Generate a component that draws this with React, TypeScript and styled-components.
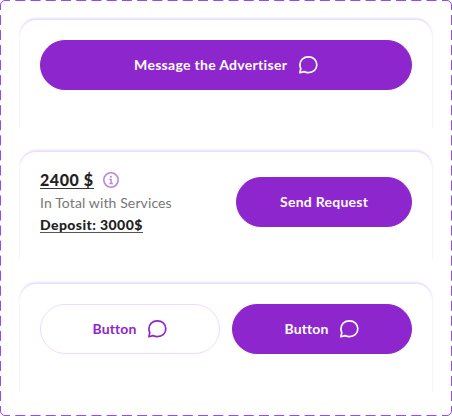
import React from "react";
import styled, { createGlobalStyle, css } from "styled-components";

const GlobalStyle = createGlobalStyle`
  * { box-sizing: border-box; }
  body { margin: 0; background: #fff; font-family: Lato, "Open Sans", sans-serif; }
`;

const Frame = styled.main`
  position: relative;
  display: flex;
  flex-direction: column;
  gap: 22px;
  width: 452px;
  height: 416px;
  padding: 20px;
  overflow: hidden;
  background: #fff;
`;

const Outline = styled.svg`
  position: absolute;
  inset: 0;
  pointer-events: none;
`;

const Panel = styled.section`
  display: flex;
  align-items: flex-start;
  justify-content: space-between;
  gap: 12px;
  height: 110px;
  padding: 20px;
  border-radius: 16px 16px 0 0;
  background: #fff;
  box-shadow: 0 -2px 2px #eadcff, 0 0 1px #efe4ff;
  clip-path: inset(-6px -6px 0 -6px);
`;

const Button = styled.button<{ $outlined?: boolean; $width?: number }>`
  display: flex;
  align-items: center;
  justify-content: center;
  gap: 9px;
  height: 50px;
  padding: 0;
  ${({ $width }) => ($width ? css`flex: 0 0 ${$width}px;` : css`flex: 1;`)}
  border: 1px solid ${({ $outlined }) => ($outlined ? "#f0daff" : "#8e26cd")};
  border-radius: 25px;
  background: ${({ $outlined }) => ($outlined ? "#fff" : "#8e26cd")};
  color: ${({ $outlined }) => ($outlined ? "#8e26cd" : "#fff")};
  font: 700 14px/20px Lato, sans-serif;

  svg { margin-right: -2px; }
`;

const Label = styled.span<{ $spacing: number }>`
  letter-spacing: ${({ $spacing }) => $spacing}px;
  margin-right: ${({ $spacing }) => -$spacing}px;
`;

const SummaryRow = styled.div`
  display: flex;
  align-items: center;
  justify-content: space-between;
  width: 100%;
  height: 60px;
`;

const Summary = styled.div`
  display: flex;
  flex-direction: column;
  color: #222;
`;

const PriceLine = styled.div`
  display: flex;
  align-items: center;
  gap: 7px;
  height: 18px;
`;

const Price = styled.span`
  border-bottom: 1px solid #333;
  font: 900 16px/17px Lato, sans-serif;
  letter-spacing: 0.55px;
  width: 54px;
  white-space: nowrap;
`;

const Caption = styled.span`
  margin-top: 3px;
  color: #777;
  font: 400 14px/22px Lato, sans-serif;
  letter-spacing: 0.12px;
`;

const Deposit = styled.span`
  align-self: flex-start;
  margin-top: 3px;
  border-bottom: 1px solid #555;
  font: 900 14px/15px Lato, sans-serif;
  letter-spacing: 0.42px;
  white-space: nowrap;
  width: 103px;
`;

function ChatIcon() {
  return (
    <svg width="24" height="24" viewBox="0 0 24 24" fill="none" stroke="currentColor" strokeWidth="1.7" strokeLinejoin="round">
      <path d="M12.4 3.9C17.3 3.9 20.8 7.2 20.8 11.8S17.3 19.7 12.4 19.7C10.8 19.7 9.3 19.3 8 18.6L3.9 19.7L4.8 15.5C4.2 14.4 3.9 13.2 3.9 11.8C3.9 7.2 7.5 3.9 12.4 3.9Z" />
    </svg>
  );
}

function InfoIcon() {
  return (
    <svg width="20" height="20" viewBox="0 0 20 20" fill="none" stroke="#bd83e1" strokeWidth="1.6">
      <circle cx="10" cy="10" r="7.2" />
      <path d="M8.3 9.5H10.1V13.4M8.5 13.5H11.8" strokeWidth="1.4" />
      <circle cx="9.9" cy="6.8" r="1" fill="#bd83e1" stroke="none" />
    </svg>
  );
}

export default function App() {
  return (
    <>
      <GlobalStyle />
      <Frame>
        <Panel>
          <Button>
            <Label $spacing={0.3}>Message the Advertiser</Label>
            <ChatIcon />
          </Button>
        </Panel>
        <Panel>
          <SummaryRow>
            <Summary>
              <PriceLine>
                <Price>2400 $</Price>
                <InfoIcon />
              </PriceLine>
              <Caption>In Total with Services</Caption>
              <Deposit>Deposit: 3000$</Deposit>
            </Summary>
            <Button $width={176}>
              <Label $spacing={0.25}>Send Request</Label>
            </Button>
          </SummaryRow>
        </Panel>
        <Panel>
          <Button $outlined>
            <Label $spacing={0.1}>Button</Label>
            <ChatIcon />
          </Button>
          <Button>
            <Label $spacing={0.1}>Button</Label>
            <ChatIcon />
          </Button>
        </Panel>
        <Outline width="452" height="416" fill="none" stroke="#9747ff" aria-hidden="true">
          <path d="M0.5 10V5A4.5 4.5 0 0 1 5 0.5H10M442 0.5H447A4.5 4.5 0 0 1 451.5 5V10M451.5 406V411A4.5 4.5 0 0 1 447 415.5H442M10 415.5H5A4.5 4.5 0 0 1 0.5 411V406" />
          <path d="M15.3 0.5H437M15.3 415.5H437" strokeDasharray="10 5.23" />
          <path d="M0.5 15V401M451.5 15V401" strokeDasharray="10 5.04" />
        </Outline>
      </Frame>
    </>
  );
}
